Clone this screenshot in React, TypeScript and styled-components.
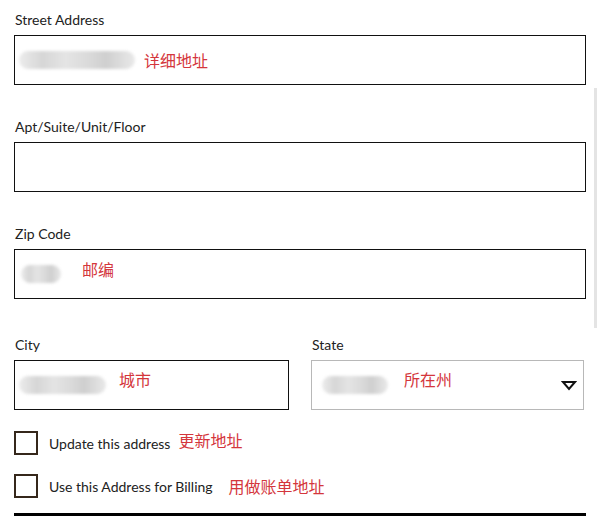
import React from 'react';
import styled, { createGlobalStyle } from 'styled-components';

const Global = createGlobalStyle`
  body {
    margin: 0;
    background: #fff;
    font-family: Lato, "Noto Sans", "Noto Sans CJK SC", sans-serif;
  }
`;

const Page = styled.div`
  position: relative;
  width: 600px;
  height: 526px;
  padding: 10px 14px 0 14px;
  box-sizing: border-box;
  overflow: hidden;
`;

const Field = styled.div<{ $top?: number }>`
  display: flex;
  flex-direction: column;
  margin-top: ${p => p.$top ?? 0}px;
`;

const Label = styled.div`
  height: 20px;
  line-height: 20px;
  font-size: 14px;
  color: #222;
  margin-bottom: 5px;
  padding-left: 1px;
`;

const Box = styled.div<{ $light?: boolean }>`
  height: 50px;
  box-sizing: border-box;
  border: 1px solid ${p => (p.$light ? '#b8b8b8' : '#111')};
  display: flex;
  align-items: center;
  padding-left: 4px;
  position: relative;
`;

const Blob = styled.div<{ $w: number; $left?: number }>`
  width: ${p => p.$w}px;
  height: 18px;
  margin-left: ${p => p.$left ?? 0}px;
  border-radius: 9px;
  background: linear-gradient(
    90deg,
    #ececec 0%,
    #d6d6d6 20%,
    #e4e4e4 40%,
    #dadada 60%,
    #cfcfcf 75%,
    #e9e9e9 100%
  );
  filter: blur(1.5px);
  flex-shrink: 0;
`;

const Note = styled.span<{ $gap: number; $lift?: number }>`
  margin-left: ${p => p.$gap}px;
  font-family: "Noto Sans CJK SC", sans-serif;
  font-size: 16px;
  color: #d4363c;
  position: relative;
  top: ${p => -(p.$lift ?? 0)}px;
`;

const Row = styled.div`
  display: flex;
  gap: 22px;
  margin-top: 36px;
`;

const Half = styled(Field)<{ $w: number }>`
  width: ${p => p.$w}px;
`;

const Caret = styled.svg`
  position: absolute;
  right: 6px;
  top: 19px;
`;

const Check = styled.label<{ $top: number }>`
  display: flex;
  align-items: center;
  margin-top: ${p => p.$top}px;
  height: 24px;
`;

const Square = styled.span`
  width: 24px;
  height: 24px;
  box-sizing: border-box;
  border: 2px solid #35271b;
  flex-shrink: 0;
`;

const CheckText = styled.span`
  margin-left: 11px;
  font-size: 14px;
  color: #222;
`;

const Rule = styled.div`
  margin-top: 15px;
  height: 3px;
  background: #000;
`;

const ScrollThumb = styled.div`
  position: absolute;
  left: 594px;
  top: 88px;
  width: 3px;
  height: 240px;
  background: #e4e4e4;
`;

export default function App() {
  return (
    <>
      <Global />
      <Page>
        <Field>
          <Label>Street Address</Label>
          <Box>
            <Blob $w={116} />
            <Note $gap={9}>详细地址</Note>
          </Box>
        </Field>
        <Field $top={32}>
          <Label>Apt/Suite/Unit/Floor</Label>
          <Box />
        </Field>
        <Field $top={32}>
          <Label>Zip Code</Label>
          <Box>
            <Blob $w={40} $left={2} />
            <Note $gap={21} $lift={5}>邮编</Note>
          </Box>
        </Field>
        <Row>
          <Half $w={275}>
            <Label>City</Label>
            <Box>
              <Blob $w={87} />
              <Note $gap={13} $lift={6}>城市</Note>
            </Box>
          </Half>
          <Half $w={273}>
            <Label>State</Label>
            <Box $light>
              <Blob $w={66} $left={6} />
              <Note $gap={16} $lift={6}>所在州</Note>
              <Caret width="16" height="11" viewBox="0 0 16 11">
                <path d="M2 2 H14 L8 9 Z" fill="none" stroke="#111" strokeWidth="2" strokeLinejoin="miter" />
              </Caret>
            </Box>
          </Half>
        </Row>
        <Check $top={21}>
          <Square />
          <CheckText>Update this address</CheckText>
          <Note $gap={8} $lift={3}>更新地址</Note>
        </Check>
        <Check $top={19}>
          <Square />
          <CheckText>Use this Address for Billing</CheckText>
          <Note $gap={16}>用做账单地址</Note>
        </Check>
        <Rule />
        <ScrollThumb />
      </Page>
    </>
  );
}
